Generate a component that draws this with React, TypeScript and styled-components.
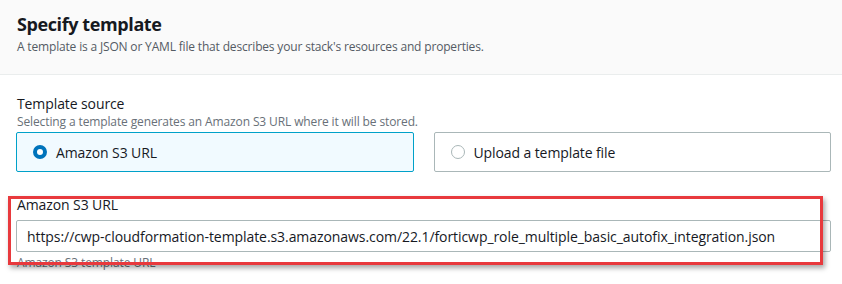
import React from 'react';
import styled, { createGlobalStyle } from 'styled-components';

const GlobalStyle = createGlobalStyle`
  html, body {
    margin: 0;
    padding: 0;
    background: #ffffff;
  }
  body {
    font-family: "Open Sans", "Noto Sans", Arial, sans-serif;
    color: #16191f;
  }
`;

const Page = styled.div`
  width: 842px;
  height: 284px;
  overflow: hidden;
  position: relative;
  background: #fff;
`;

const Header = styled.div`
  background: #fafafa;
  border-bottom: 1px solid #eaeded;
  height: 75px;
  box-sizing: border-box;
  padding: 12px 17px 0;
`;

const Title = styled.h2`
  margin: 0;
  font-size: 18px;
  line-height: 24px;
  font-weight: 700;
  letter-spacing: -0.4px;
  color: #16191f;
`;

const Description = styled.p`
  margin: 3px 0 0;
  font-size: 12px;
  line-height: 16px;
  letter-spacing: -0.17px;
  color: #545b64;
`;

const Body = styled.div`
  padding: 19px 11px 0 16px;
  display: flex;
  flex-direction: column;
`;

const FieldLabel = styled.div`
  font-size: 14px;
  line-height: 20px;
  letter-spacing: -0.1px;
  color: #16191f;
  padding-left: 1px;
`;

const Hint = styled.div`
  font-size: 12px;
  line-height: 16px;
  letter-spacing: -0.12px;
  color: #687078;
  padding-left: 1px;
`;

const Tiles = styled.div`
  display: grid;
  grid-template-columns: 1fr 1fr;
  gap: 20px;
  margin-top: 2px;
`;

const Tile = styled.label<{ $selected?: boolean }>`
  display: flex;
  align-items: center;
  gap: 9px;
  height: 40px;
  box-sizing: border-box;
  padding: 0 16px;
  border: 1px solid ${p => (p.$selected ? '#00a1c9' : '#aab7b8')};
  background: ${p => (p.$selected ? '#f1faff' : '#ffffff')};
  border-radius: 2px;
  font-size: 14px;
  letter-spacing: -0.1px;
  color: #16191f;
`;

const Radio = styled.span<{ $checked?: boolean }>`
  width: 14px;
  height: 14px;
  box-sizing: border-box;
  border-radius: 50%;
  flex: none;
  border: ${p => (p.$checked ? '4px solid #0073bb' : '1px solid #aab7b8')};
  background: #fff;
`;

const UrlField = styled.div`
  margin-top: 23px;
  display: flex;
  flex-direction: column;
`;

const UrlInput = styled.div`
  margin-top: 5px;
  height: 32px;
  box-sizing: border-box;
  border: 1px solid #aab7b8;
  border-radius: 2px;
  padding: 0 10px;
  display: flex;
  align-items: center;
  font-size: 14px;
  letter-spacing: -0.07px;
  color: #16191f;
  white-space: nowrap;
`;

const UrlHint = styled(Hint)`
  margin-top: 3px;
`;

const Highlight = styled.div`
  position: absolute;
  left: 8px;
  top: 196px;
  width: 815px;
  height: 69px;
  box-sizing: border-box;
  border: 3px solid #e8393d;
  box-shadow: 2px 3px 5px rgba(0, 0, 0, 0.35);
  pointer-events: none;
`;

export default function App() {
  return (
    <Page>
      <GlobalStyle />
      <Header>
        <Title>Specify template</Title>
        <Description>
          A template is a JSON or YAML file that describes your stack's resources and properties.
        </Description>
      </Header>
      <Body>
        <FieldLabel>Template source</FieldLabel>
        <Hint>Selecting a template generates an Amazon S3 URL where it will be stored.</Hint>
        <Tiles>
          <Tile $selected>
            <Radio $checked />
            Amazon S3 URL
          </Tile>
          <Tile>
            <Radio />
            Upload a template file
          </Tile>
        </Tiles>
        <UrlField>
          <FieldLabel>Amazon S3 URL</FieldLabel>
          <UrlInput>
            https://cwp-cloudformation-template.s3.amazonaws.com/22.1/forticwp_role_multiple_basic_autofix_integration.json
          </UrlInput>
          <UrlHint>Amazon S3 template URL</UrlHint>
        </UrlField>
      </Body>
      <Highlight />
    </Page>
  );
}
